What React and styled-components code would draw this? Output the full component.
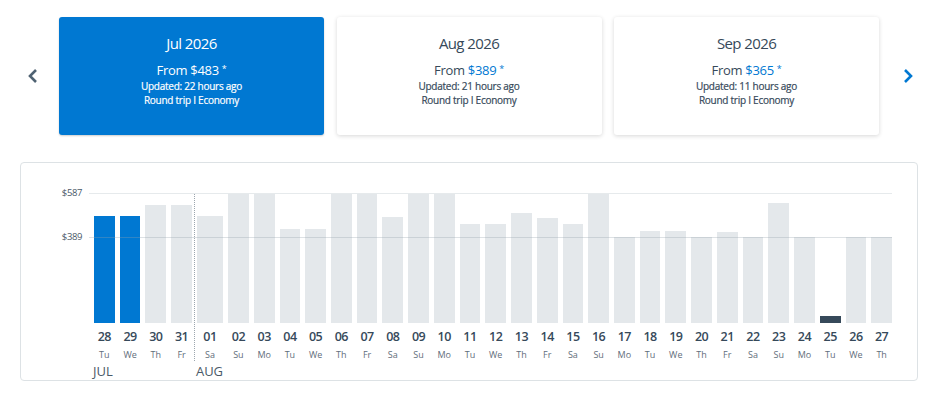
import React from 'react';
import styled, { createGlobalStyle, css } from 'styled-components';

const blue = '#0078d2';
const slate = '#36495a';
const barGrey = '#e4e8eb';

const GlobalStyle = createGlobalStyle`
  html, body {
    margin: 0;
    padding: 0;
    background: #ffffff;
  }
  body {
    font-family: "Open Sans", "Noto Sans", "Liberation Sans", sans-serif;
    color: ${slate};
    width: 936px;
  }
`;

const months = [
  { label: 'Jul 2026', price: 483, updated: '22 hours ago', active: true },
  { label: 'Aug 2026', price: 389, updated: '21 hours ago' },
  { label: 'Sep 2026', price: 365, updated: '11 hours ago' },
];

const MAX_PRICE = 587;
const REF_PRICE = 389;
const PLOT_HEIGHT = 130;

// price per day, null = no fare shown (tiny marker)
const days = [
  ['28', 'Tu', 483, 'JUL'], ['29', 'We', 483], ['30', 'Th', 533], ['31', 'Fr', 533],
  ['01', 'Sa', 483, 'AUG'], ['02', 'Su', 587], ['03', 'Mo', 587], ['04', 'Tu', 424],
  ['05', 'We', 424], ['06', 'Th', 587], ['07', 'Fr', 587], ['08', 'Sa', 479],
  ['09', 'Su', 587], ['10', 'Mo', 587], ['11', 'Tu', 447], ['12', 'We', 447],
  ['13', 'Th', 497], ['14', 'Fr', 474], ['15', 'Sa', 447], ['16', 'Su', 587],
  ['17', 'Mo', 389], ['18', 'Tu', 415], ['19', 'We', 415], ['20', 'Th', 389],
  ['21', 'Fr', 411], ['22', 'Sa', 389], ['23', 'Su', 542], ['24', 'Mo', 389],
  ['25', 'Tu', null], ['26', 'We', 389], ['27', 'Th', 389],
];
const selected = ['28', '29'];

const Page = styled.div`
  padding-top: 17px;
  padding-bottom: 20px;
`;

const Carousel = styled.div`
  display: flex;
  align-items: center;
`;

const Arrow = styled.button`
  width: ${p => p.$side === 'left' ? '59px' : '57px'};
  padding: ${p => p.$side === 'left' ? '0 0 0 7px' : '0'};
  height: 118px;
  border: 0;
  background: none;
  display: flex;
  align-items: center;
  justify-content: center;
  cursor: pointer;
  color: ${p => p.$side === 'left' ? '#4f6272' : blue};
`;

const Cards = styled.div`
  display: flex;
  gap: 12.5px;
`;

const Card = styled.div`
  width: 265px;
  height: 118px;
  box-sizing: border-box;
  padding-top: 16px;
  border-radius: 3px;
  text-align: center;
  ${p => p.$active ? css`
    background: ${blue};
    color: #ffffff;
    box-shadow: 0 1px 2px rgba(0, 0, 0, 0.2);
  ` : css`
    background: #ffffff;
    color: ${slate};
    box-shadow: 0 1px 4px rgba(0, 0, 0, 0.16);
  `}
`;

const CardTitle = styled.div`
  font-size: 15px;
  line-height: 20px;
  letter-spacing: -0.6px;
`;

const CardPrice = styled.div`
  margin-top: 7px;
  font-size: 13px;
  line-height: 20px;
  letter-spacing: -0.3px;
`;

const Amount = styled.span`
  color: ${p => p.$active ? '#ffffff' : blue};
`;

const Star = styled.sup`
  font-size: 9px;
  margin-left: 3px;
  vertical-align: 3px;
  line-height: 0;
  color: ${p => p.$active ? '#ffffff' : blue};
`;

const CardMeta = styled.div`
  font-size: 10px;
  line-height: 13.5px;
  font-weight: 400;
  letter-spacing: -0.25px;
  -webkit-text-stroke: 0.2px currentColor;
`;

const Panel = styled.section`
  margin: 26.5px 18px 0 20px;
  height: 219px;
  box-sizing: border-box;
  border: 1px solid #dde2e5;
  border-radius: 4px;
  padding: 30.5px 25px 0 0;
  display: grid;
  grid-template-columns: 68px 1fr;
`;

const Axis = styled.div`
  position: relative;
  height: ${PLOT_HEIGHT}px;
`;

const AxisLabel = styled.span`
  position: absolute;
  right: 7px;
  transform: translateY(-50%);
  font-size: 9.5px;
  letter-spacing: -0.4px;
  color: #4a5a68;
  line-height: 12px;
`;

const Plot = styled.div`
  position: relative;
`;

const GridLine = styled.div`
  position: absolute;
  left: 0;
  right: 0;
  height: 1px;
  background: ${p => p.$strong ? 'rgba(150, 162, 172, 0.32)' : '#e6eaec'};
  pointer-events: none;
  z-index: 2;
`;

const Columns = styled.div`
  display: grid;
  grid-template-columns: repeat(31, 1fr);
`;

const Column = styled.div`
  padding-left: 5px;
`;

const Stack = styled.div`
  position: relative;
  ${p => p.$monthStart && css`
    &::before {
      content: '';
      position: absolute;
      left: -2.5px;
      top: 0;
      bottom: 0;
      border-left: 1px dotted #9ca6ae;
    }
  `}
`;

const BarArea = styled.div`
  height: ${PLOT_HEIGHT}px;
  display: flex;
  align-items: flex-end;
`;

const Bar = styled.div`
  width: 100%;
  background: ${p => p.$kind === 'selected' ? blue : p.$kind === 'empty' ? slate : barGrey};
`;

const DayNum = styled.div`
  margin-top: 5.5px;
  text-align: center;
  font-size: 12.5px;
  line-height: 16px;
  font-weight: 600;
  letter-spacing: -0.5px;
  color: ${slate};
`;

const DayName = styled.div`
  margin-top: 4px;
  text-align: center;
  font-size: 9px;
  line-height: 12px;
  color: #5f6e7b;
`;

const MonthLabel = styled.div`
  margin-top: 3px;
  margin-left: -1px;
  height: 14px;
  font-size: 13px;
  line-height: 14px;
  color: #4a5a68;
  white-space: nowrap;
`;

const Chevron = ({ dir }) => (
  <svg width="12" height="16" viewBox="0 0 12 16" aria-hidden="true">
    <polyline
      points={dir === 'left' ? '9,2 3,8 9,14' : '3,2 9,8 3,14'}
      fill="none"
      stroke="currentColor"
      strokeWidth="2.6"
    />
  </svg>
);

const toHeight = price => (price / MAX_PRICE) * PLOT_HEIGHT;

export default function App() {
  return (
    <Page>
      <GlobalStyle />
      <Carousel>
        <Arrow $side="left" aria-label="Previous months"><Chevron dir="left" /></Arrow>
        <Cards>
          {months.map(m => (
            <Card key={m.label} $active={m.active}>
              <CardTitle>{m.label}</CardTitle>
              <CardPrice>
                From <Amount $active={m.active}>${m.price}</Amount>
                <Star $active={m.active}>*</Star>
              </CardPrice>
              <CardMeta>Updated: {m.updated}</CardMeta>
              <CardMeta>Round trip I Economy</CardMeta>
            </Card>
          ))}
        </Cards>
        <Arrow $side="right" aria-label="Next months"><Chevron dir="right" /></Arrow>
      </Carousel>

      <Panel>
        <Axis>
          <AxisLabel style={{ top: 0 }}>${MAX_PRICE}</AxisLabel>
          <AxisLabel style={{ top: PLOT_HEIGHT - toHeight(REF_PRICE) }}>${REF_PRICE}</AxisLabel>
        </Axis>
        <Plot>
          <GridLine style={{ top: 0 }} />
          <GridLine $strong style={{ top: PLOT_HEIGHT - toHeight(REF_PRICE) }} />
          <Columns>
            {days.map(([num, name, price, month]) => {
              const kind = price === null ? 'empty' : selected.includes(num) ? 'selected' : 'normal';
              return (
                <Column key={num + name}>
                  <Stack $monthStart={month === 'AUG'}>
                    <BarArea>
                      <Bar $kind={kind} style={{ height: price === null ? 7 : toHeight(price) }} />
                    </BarArea>
                    <DayNum>{num}</DayNum>
                    <DayName>{name}</DayName>
                  </Stack>
                  <MonthLabel>{month || ''}</MonthLabel>
                </Column>
              );
            })}
          </Columns>
        </Plot>
      </Panel>
    </Page>
  );
}
